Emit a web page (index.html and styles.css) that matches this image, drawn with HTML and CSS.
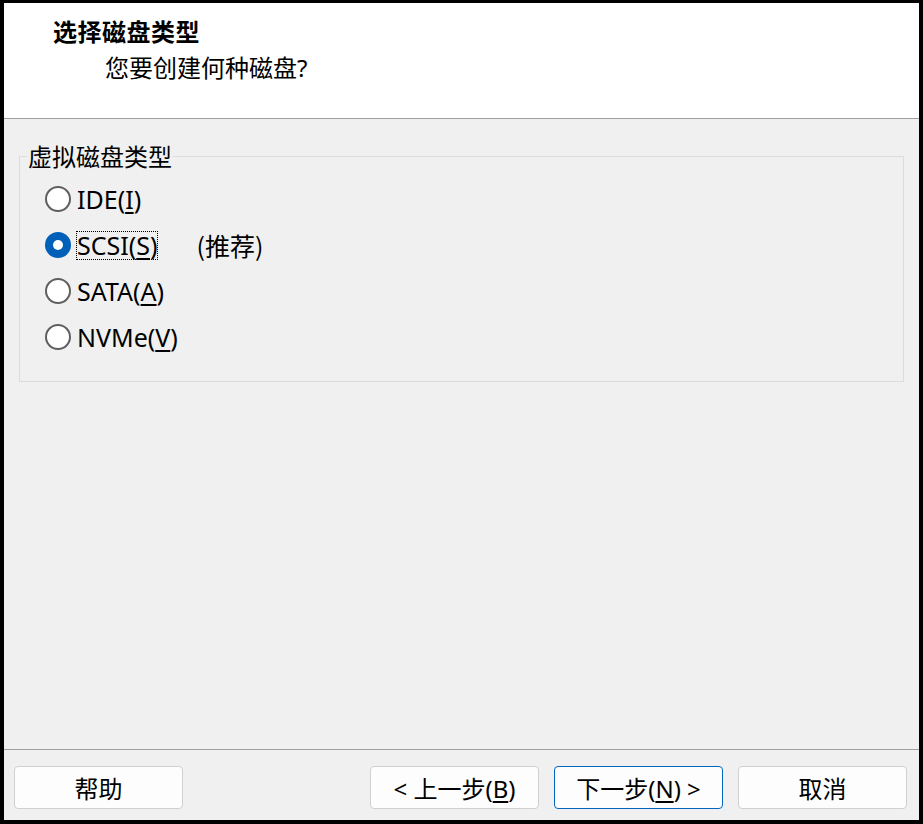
FILE: index.html
```html
<!DOCTYPE html>
<html lang="zh-CN">
<head>
<meta charset="utf-8">
<link rel="stylesheet" href="styles.css">
</head>
<body>
<div class="window">
  <div class="header">
    <div class="title">选择磁盘类型</div>
    <div class="subtitle">您要创建何种磁盘?</div>
  </div>
  <div class="content">
    <fieldset class="group">
      <legend class="legend">虚拟磁盘类型</legend>
      <label class="radio-row"><span class="radio"></span><span class="label">IDE(<u>I</u>)</span></label>
      <label class="radio-row"><span class="radio checked"></span><span class="label focus">SCSI(<u>S</u>)</span><span class="hint">(推荐)</span></label>
      <label class="radio-row"><span class="radio"></span><span class="label">SATA(<u>A</u>)</span></label>
      <label class="radio-row"><span class="radio"></span><span class="label">NVMe(<u>V</u>)</span></label>
    </fieldset>
  </div>
  <div class="footer">
    <button class="btn">帮助</button>
    <div class="spacer"></div>
    <button class="btn">&lt; 上一步(<u>B</u>)</button>
    <button class="btn primary">下一步(<u>N</u>) &gt;</button>
    <button class="btn">取消</button>
  </div>
</div>
</body>
</html>
```

FILE: styles.css
```css
* { box-sizing: border-box; }
html, body { margin: 0; padding: 0; }
body {
  font-family: "Noto Sans", "Noto Sans CJK SC", sans-serif;
  color: #000;
}
.window {
  width: 923px;
  height: 824px;
  border-style: solid;
  border-color: #000;
  border-width: 3px 4px 4px 4px;
  background: #f0f0f0;
  display: flex;
  flex-direction: column;
}
.header {
  height: 116px;
  background: #fff;
  border-bottom: 1px solid #a0a0a0;
  padding: 14px 0 0 49px;
}
.title {
  font-size: 24px;
  font-weight: bold;
  line-height: 28px;
  letter-spacing: 0.5px;
  font-family: "Noto Sans CJK SC", sans-serif;
}
.subtitle {
  font-size: 24px;
  line-height: 28px;
  margin-top: 9px;
  padding-left: 52px;
  font-family: "Noto Sans", "Noto Sans CJK SC", sans-serif;
}
.content {
  flex: 1;
  padding: 24px 15px 0 15px;
}
.group {
  margin: 0;
  border: 1px solid #dcdcdc;
  padding: 7px 0 21px 25px;
  min-width: 0;
}
.legend {
  font-size: 24px;
  line-height: 26px;
  padding: 0 1px;
  margin-left: -18px;
  color: #000;
  font-family: "Noto Sans CJK SC", sans-serif;
}
.radio-row {
  display: flex;
  align-items: center;
  height: 46px;
  font-size: 25px;
}
.radio {
  width: 26px;
  height: 26px;
  border-radius: 50%;
  border: 2px solid #5f5f5f;
  background: #fff;
  margin-right: 5px;
  flex: none;
  position: relative;
}
.radio.checked {
  border: none;
  background: #005fb8;
}
.radio.checked::after {
  content: "";
  position: absolute;
  left: 8px;
  top: 8px;
  width: 10px;
  height: 10px;
  border-radius: 50%;
  background: #fff;
}
.label {
  padding: 0;
  border: 1px dotted transparent;
  line-height: 27px;
}
.label.focus {
  border-color: #000;
}
.hint {
  margin-left: 38px;
  font-family: "Noto Sans CJK SC", sans-serif;
}
u { text-underline-offset: 3px; }
.footer {
  height: 71px;
  border-top: 1px solid #a0a0a0;
  display: flex;
  align-items: flex-start;
  padding: 16px 12px 0 10px;
  gap: 15px;
}
.spacer { flex: 1; }
.btn {
  width: 169px;
  height: 43px;
  background: #fdfdfd;
  border: 1px solid #d0d0d0;
  border-radius: 4px;
  font-family: "Noto Sans", "Noto Sans CJK SC", sans-serif;
  font-size: 24px;
  color: #000;
  padding: 0;
}
.btn.primary {
  border-color: #0067c0;
}
```
